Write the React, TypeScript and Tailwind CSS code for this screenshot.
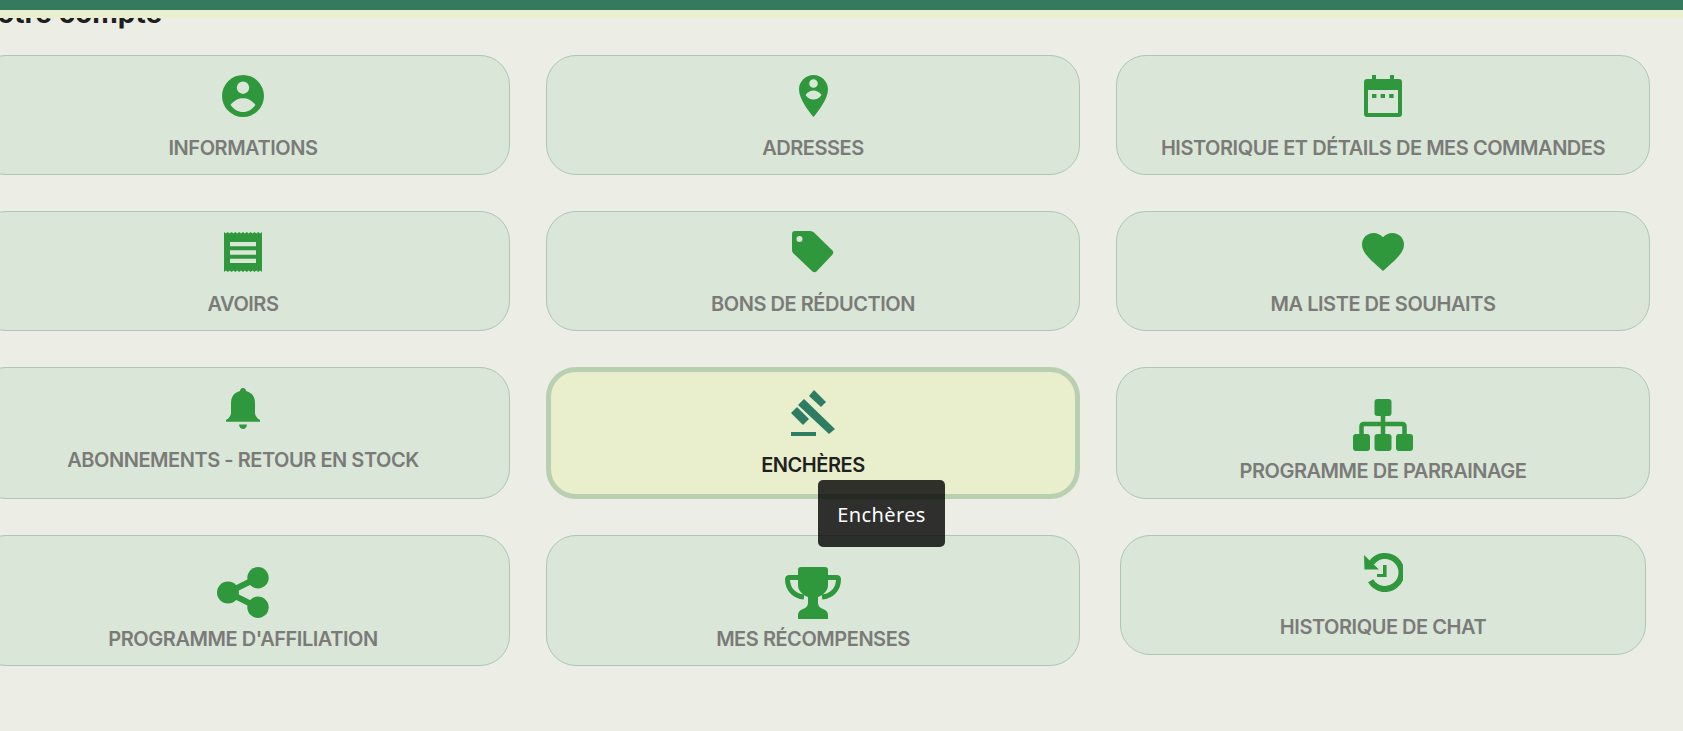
import React from "react";

const G = "#2f983d";

const zig = (() => {
  let top = "M0 0";
  for (let i = 0; i < 10; i++) top += `L${(i * 3.8 + 1.9).toFixed(1)} 1.6L${((i + 1) * 3.8).toFixed(1)} 0`;
  let bottom = "V40";
  for (let i = 10; i > 0; i--) bottom += `L${((i - 1) * 3.8 + 1.9).toFixed(1)} 38.4L${((i - 1) * 3.8).toFixed(1)} 40`;
  return top + bottom + "Z";
})();

const InfoIcon = () => (
  <svg width="42" height="42" viewBox="0 0 42 42" fill={G}>
    <path fillRule="evenodd" d="M21 0a21 21 0 1 1 0 42a21 21 0 1 1 0-42ZM21 6.5a6.2 6.2 0 1 0 0 12.4a6.2 6.2 0 1 0 0-12.4ZM8.5 30C12 25 17 23.2 21 23.2C25 23.2 30 25 33.5 30C30 34.5 26 37 21 37C16 37 12 34.5 8.5 30Z" />
  </svg>
);
const PinIcon = () => (
  <svg width="29" height="42" viewBox="0 0 29 42" fill={G}>
    <path fillRule="evenodd" d="M14.5 0C22.5 0 29 6.5 29 14.5C29 24 19 36.5 14.5 42C10 36.5 0 24 0 14.5C0 6.5 6.5 0 14.5 0ZM14.5 4.2a4.3 4.3 0 1 0 0 8.6a4.3 4.3 0 1 0 0-8.6ZM6.5 20C8.5 17.2 11.5 15.6 14.5 15.6C17.5 15.6 20.5 17.2 22.5 20C20.5 23 17.5 24.6 14.5 24.6C11.5 24.6 8.5 23 6.5 20Z" />
  </svg>
);
const CalendarIcon = () => (
  <svg width="38" height="42" viewBox="0 0 38 42" fill={G}>
    <path fillRule="evenodd" d="M8 0H12V4H26V0H30V4H35Q38 4 38 7V39Q38 42 35 42H3Q0 42 0 39V7Q0 4 3 4H8ZM4 15V38H34V15Z" />
    <rect x="8" y="19" width="4.4" height="4" />
    <rect x="16.6" y="19" width="4.4" height="4" />
    <rect x="25.2" y="19" width="4.4" height="4" />
  </svg>
);
const ReceiptIcon = () => (
  <svg className="mt-[1px]" width="38" height="40" viewBox="0 0 38 40" fill={G}>
    <path fillRule="evenodd" d={zig + "M6 10V14.3H32V10ZM6 18.3V22.7H32V18.3ZM6 26.7V31H32V26.7Z"} />
  </svg>
);
const TagIcon = () => (
  <svg width="42" height="42" viewBox="0 0 42 42" fill={G}>
    <path fillRule="evenodd" d="M3 0H18Q20.5 0 22 1.5L40.5 19.5Q42 21.5 40.5 23.5L24.5 40.5Q22.5 42 20.5 40.5L1.5 22.5Q0 21 0 19V3Q0 0 3 0ZM7.5 5a3 3 0 1 0 0 6a3 3 0 1 0 0-6Z" />
  </svg>
);
const HeartIcon = () => (
  <svg className="mt-[2px]" width="42" height="38" viewBox="2 3 20 18.35" preserveAspectRatio="none" fill={G}>
    <path d="M12 21.35l-1.45-1.32C5.4 15.36 2 12.28 2 8.5 2 5.42 4.42 3 7.5 3c1.74 0 3.41.81 4.5 2.09C13.09 3.81 14.76 3 16.5 3 19.58 3 22 5.42 22 8.5c0 3.78-3.4 6.86-8.55 11.54L12 21.35z" />
  </svg>
);
const BellIcon = () => (
  <svg width="34" height="41" viewBox="0 0 34 41" fill={G}>
    <path d="M17 0C19 0 20 1.5 20 3C26 4.5 29 9 29 15V25C29 28 32 31 34 32V33.8H0V32C2 31 5 28 5 25V15C5 9 8 4.5 14 3C14 1.5 15 0 17 0Z" />
    <path d="M13 36.5H21C21 39 19 41 17 41C15 41 13 39 13 36.5Z" />
  </svg>
);
const GavelIcon = () => (
  <svg width="44" height="46" viewBox="0 0 44 46" fill="#2e7d63">
    <polygon points="23,0 35,12 30,17 18,6" />
    <polygon points="13,9 44,39 38,44 7,15" />
    <polygon points="6,17 18,29 12,35 0,23" />
    <rect x="0" y="42" width="25" height="4" />
  </svg>
);
const SitemapIcon = () => (
  <svg width="60" height="52" viewBox="0 0 60 52" fill={G}>
    <rect x="21.5" y="0" width="17" height="17" rx="3" />
    <rect x="0" y="35" width="17" height="17" rx="3" />
    <rect x="21.5" y="35" width="17" height="17" rx="3" />
    <rect x="43" y="35" width="17" height="17" rx="3" />
    <path d="M30 17V35M8.5 35V27.5Q8.5 25 11 25H49Q51.5 25 51.5 27.5V35" fill="none" stroke={G} strokeWidth="4.5" />
  </svg>
);
const ShareIcon = () => (
  <svg width="52" height="51" viewBox="0 0 52 51" fill={G}>
    <circle cx="11" cy="25.5" r="11" />
    <circle cx="41" cy="10.7" r="10.7" />
    <circle cx="41" cy="40.3" r="10.7" />
    <path d="M11 25.5L41 10.7M11 25.5L41 40.3" stroke={G} strokeWidth="6" fill="none" />
  </svg>
);
const TrophyIcon = () => (
  <svg width="56" height="52" viewBox="0 0 56 52" fill={G}>
    <path d="M16 0H40Q43 0 43 3V18C43 24 38 28 33 30V36C33 39 35 41 38 42C41 43 43 45 43 48V52H13V48C13 45 15 43 18 42C21 41 23 39 23 36V30C18 28 13 24 13 18V3Q13 0 16 0Z" />
    <path d="M14 10.5H4.5Q2.5 10.5 2.5 12.5C2.5 22 9 29 19 30M42 10.5H51.5Q53.5 10.5 53.5 12.5C53.5 22 47 29 37 30" fill="none" stroke={G} strokeWidth="5" />
  </svg>
);
const HistoryIcon = () => (
  <svg width="39" height="39" viewBox="0 0 39 39" fill={G}>
    <path d="M7.5 10A16.5 16.5 0 1 1 6.7 27.75" fill="none" stroke={G} strokeWidth="6" />
    <polygon points="0,2 0.5,16.5 15,16.5" />
    <path d="M19 12H22.6V24H13V21H19Z" />
  </svg>
);

type Item = { label: string; icon: React.ReactNode; box: string; pad: string; extra?: string };

const base = "flex flex-col items-center border border-[#adc6b5] bg-[#dae6d7] rounded-[30px]";
const normal = { box: "h-[58px]", pad: "pt-[19px] pb-[11px]" };
const big = { box: "h-[57px]", pad: "pt-[31px] pb-[12px]" };
const bigLow = { box: "h-[57px]", pad: "pt-[31px] pb-[11px]" };

const items: Item[] = [
  { label: "INFORMATIONS", icon: <InfoIcon />, ...normal },
  { label: "ADRESSES", icon: <PinIcon />, ...normal },
  { label: "HISTORIQUE ET DÉTAILS DE MES COMMANDES", icon: <CalendarIcon />, ...normal },
  { label: "AVOIRS", icon: <ReceiptIcon />, ...normal },
  { label: "BONS DE RÉDUCTION", icon: <TagIcon />, ...normal },
  { label: "MA LISTE DE SOUHAITS", icon: <HeartIcon />, ...normal },
  { label: "ABONNEMENTS - RETOUR EN STOCK", icon: <BellIcon />, box: "h-[57px]", pad: "pt-[20px] pb-[11px]" },
  { label: "ENCHÈRES", icon: <GavelIcon />, box: "h-[60px]", pad: "pt-[18px]", extra: "ACTIVE" },
  { label: "PROGRAMME DE PARRAINAGE", icon: <SitemapIcon />, ...big },
  { label: "PROGRAMME D'AFFILIATION", icon: <ShareIcon />, ...bigLow },
  { label: "MES RÉCOMPENSES", icon: <TrophyIcon />, ...bigLow },
  { label: "HISTORIQUE DE CHAT", icon: <HistoryIcon />, box: "h-[59px]", pad: "pt-[17px] pb-[12px]", extra: "LAST" },
];

export default function App() {
  return (
    <div className="relative h-[731px] w-[1683px] overflow-hidden bg-[#ecede4] font-['Inter',sans-serif]">
      <div className="relative z-10 h-[18px] border-t-[10px] border-[#357a5f] bg-[#e9efd0]" />
      <h1 className="-mt-[23px] -ml-[22px] text-[28px] leading-[36px] font-bold text-[#1d1f1e] font-['Inter',sans-serif]">Votre compte</h1>
      <div className="-ml-[24px] mt-[24px] grid w-[1674px] grid-cols-[534px_534px_534px] gap-x-[36px] gap-y-[36px]">
        {items.map((it) => {
          const active = it.extra === "ACTIVE";
          const last = it.extra === "LAST";
          return (
            <div
              key={it.label}
              className={
                active
                  ? "relative flex flex-col items-center rounded-[30px] border-[5px] border-[#b9d0b0] bg-[#e9efcd] " + it.pad
                  : base + " " + it.pad + (last ? " mx-[4px] self-start" : "")
              }
            >
              <div className={it.box}>{it.icon}</div>
              <span
                className={
                  "text-[20px] leading-[30px] font-semibold tracking-[-0.46px] whitespace-nowrap " +
                  (active ? "text-[#1f2120]" : "text-[#7a7b79]")
                }
              >
                {it.label}
              </span>
              {active && (
                <div className="absolute left-[267px] top-[108px] z-20 flex h-[67px] w-[127px] items-center justify-center rounded-[5px] bg-[#000000cc] pt-[2px] font-['Noto_Sans','Open_Sans',sans-serif] text-[20px] tracking-[0.4px] text-white">
                  Enchères
                </div>
              )}
            </div>
          );
        })}
      </div>
    </div>
  );
}
